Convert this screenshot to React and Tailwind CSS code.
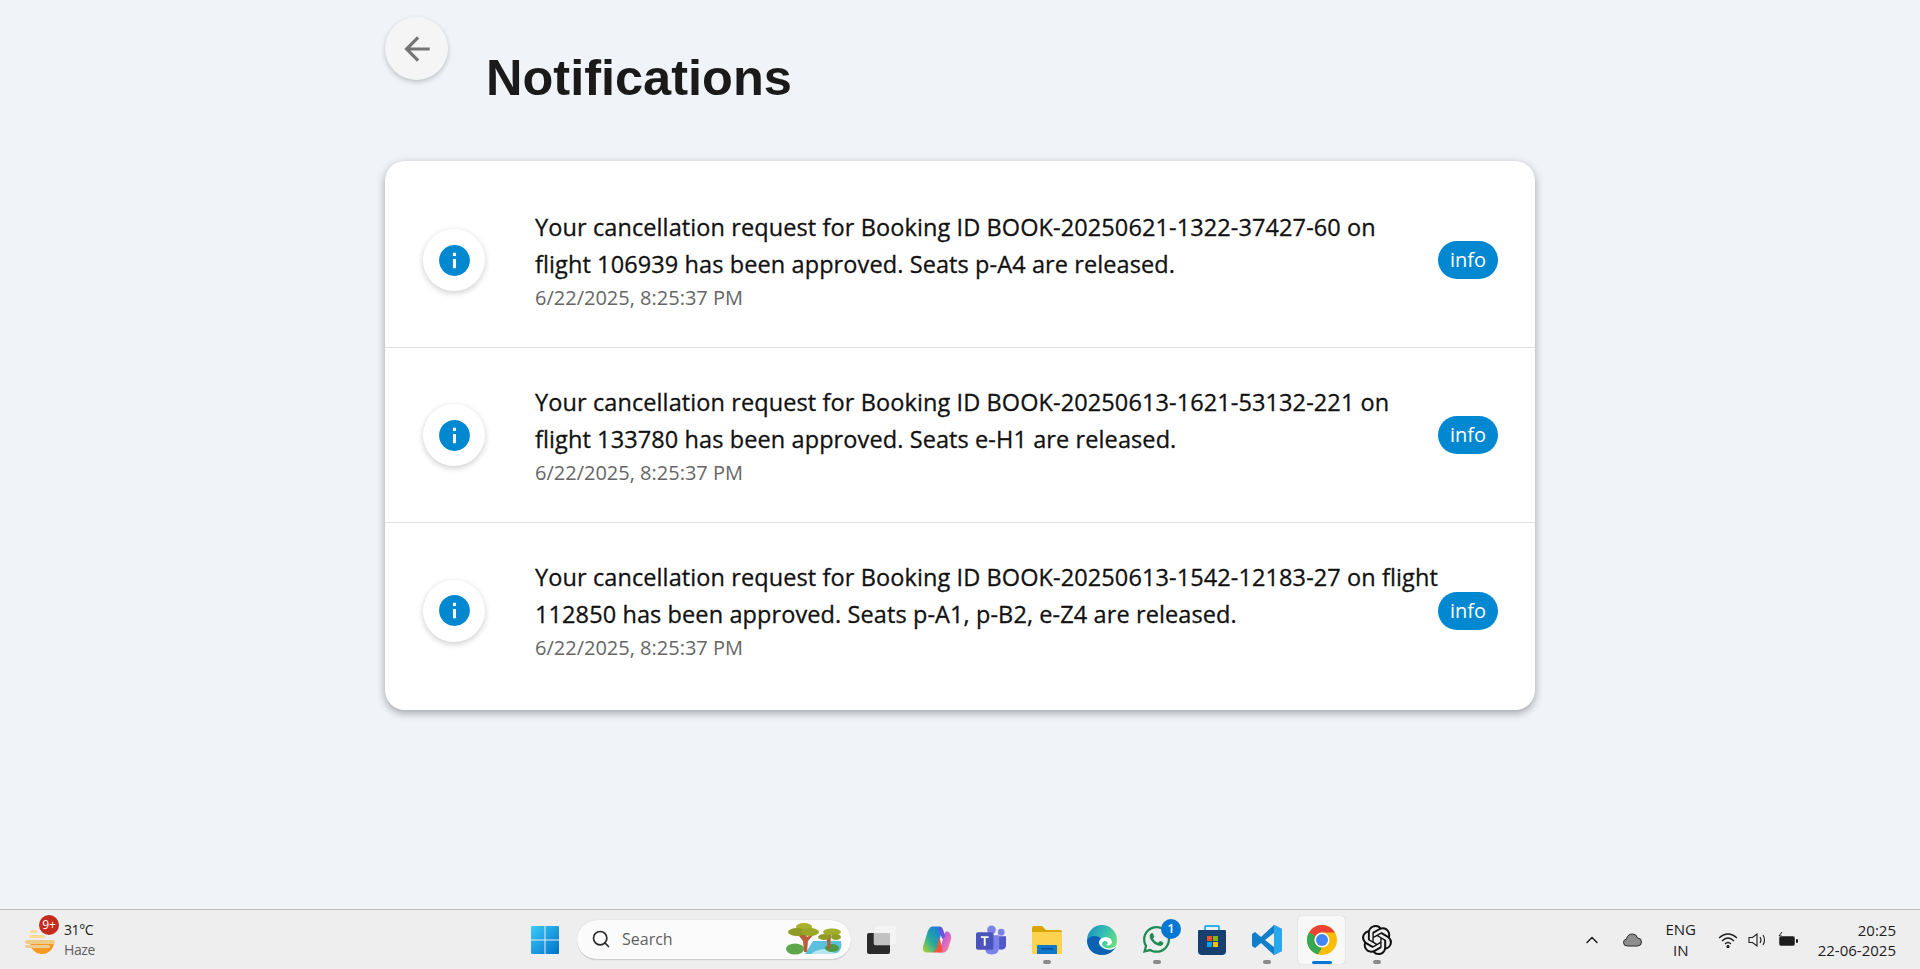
import React from "react";
import { Search, ChevronUp } from "lucide-react";
import { SiOpenai } from "react-icons/si";
import { FaWhatsapp } from "react-icons/fa";

const notifications = [
  {
    lines: [
      "Your cancellation request for Booking ID BOOK-20250621-1322-37427-60 on",
      "flight 106939 has been approved. Seats p-A4 are released.",
    ],
    time: "6/22/2025, 8:25:37 PM",
  },
  {
    lines: [
      "Your cancellation request for Booking ID BOOK-20250613-1621-53132-221 on",
      "flight 133780 has been approved. Seats e-H1 are released.",
    ],
    time: "6/22/2025, 8:25:37 PM",
  },
  {
    lines: [
      "Your cancellation request for Booking ID BOOK-20250613-1542-12183-27 on flight",
      "112850 has been approved. Seats p-A1, p-B2, e-Z4 are released.",
    ],
    time: "6/22/2025, 8:25:37 PM",
  },
];

const InfoIcon = () => (
  <svg viewBox="0 0 24 24" className="w-[37px] h-[37px] fill-[#0288d1]">
    <path d="M12 2C6.48 2 2 6.48 2 12s4.48 10 10 10 10-4.48 10-10S17.52 2 12 2zm1 15h-2v-6h2v6zm0-8h-2V7h2v2z" />
  </svg>
);

const ArrowBack = () => (
  <svg viewBox="0 0 24 24" className="w-[38px] h-[38px] fill-[#757575]">
    <path d="M20 11H7.83l5.59-5.59L12 4l-8 8 8 8 1.41-1.41L7.83 13H20v-2z" />
  </svg>
);

const NotificationRow = ({ item, last }) => (
  <div
    className={`flex items-center h-[175px] pl-[38px] pr-[37px] ${
      last ? "" : "border-b border-[#e0e0e0]"
    }`}
  >
    <div className="flex items-center justify-center w-[62px] h-[62px] shrink-0 rounded-full bg-white shadow-[0_2px_6px_rgba(0,0,0,0.2)]">
      <InfoIcon />
    </div>
    <div className="flex-1 ml-[50px] pt-[1px] min-w-0 whitespace-nowrap">
      <p className="text-[23.5px] leading-[37px] font-medium text-[#111111] tracking-[0.1px] [-webkit-text-stroke:0.3px_#111111]">
        {item.lines[0]}
        <br />
        {item.lines[1]}
      </p>
      <p className="text-[20px] leading-[30px] text-[#666666]">{item.time}</p>
    </div>
    <span className="flex items-center justify-center w-[60px] h-[38px] shrink-0 rounded-full bg-[#0288d1] text-white text-[20px]">
      info
    </span>
  </div>
);

const WeatherIcon = () => (
  <svg viewBox="0 0 34 34" className="w-[34px] h-[34px]">
    <path d="M6 19 H30 A12 12 0 0 1 6 19 Z" fill="#f39a1f" />
    <rect x="6" y="7" width="7" height="3" rx="1.5" fill="#f6dc94" />
    <rect x="5" y="12" width="16" height="3" rx="1.5" fill="#f6dc94" />
    <rect x="1" y="17" width="30" height="4" rx="2" fill="#eecb87" />
    <rect x="1" y="22" width="25" height="3" rx="1.5" fill="#eccb95" />
  </svg>
);

const WindowsLogo = () => (
  <svg viewBox="0 0 30 30" className="w-[30px] h-[30px]">
    <defs>
      <linearGradient id="win" x1="0" y1="0" x2="1" y2="1">
        <stop offset="0" stopColor="#3ccbfb" />
        <stop offset="1" stopColor="#0071c9" />
      </linearGradient>
    </defs>
    <path d="M1 2 a1 1 0 0 1 1-1 H14.5 V14.5 H1 Z M15.5 1 H28 a1 1 0 0 1 1 1 V14.5 H15.5 Z M1 15.5 H14.5 V29 H2 a1 1 0 0 1-1-1 Z M15.5 15.5 H29 V28 a1 1 0 0 1-1 1 H15.5 Z" fill="url(#win)" />
  </svg>
);

const Trees = () => (
  <svg viewBox="0 0 58 32" className="w-[58px] h-[32px] shrink-0">
    <path d="M20 31 L28 18 H56 Q58 26 52 30 L40 31 Z" fill="#5cc0dd" />
    <path d="M26 31 Q34 24 52 27 L46 31 Z" fill="#b4e8ee" />
    <ellipse cx="10" cy="26" rx="9" ry="5.5" fill="#5ea64a" />
    <ellipse cx="47" cy="25" rx="7" ry="4" fill="#4f9a45" />
    <path d="M16 12 L10 8 L18 18 L19 29 H22 L23 18 L30 10 L22 14 L20 8 Z" fill="#b85f3a" />
    <path d="M41 12 L43 26 H45 L46 12 Z" fill="#b85f3a" />
    <ellipse cx="19" cy="4" rx="8" ry="4" fill="#a8b02c" />
    <ellipse cx="12" cy="9" rx="9" ry="4" fill="#8f9c25" />
    <ellipse cx="25" cy="9" rx="9" ry="4" fill="#9aa828" />
    <ellipse cx="47" cy="9" rx="9" ry="3.5" fill="#a3ad2a" />
    <ellipse cx="39" cy="14" rx="6" ry="3" fill="#8f9c25" />
    <ellipse cx="51" cy="14" rx="5" ry="3" fill="#8f9c25" />
  </svg>
);

const TaskView = () => (
  <svg viewBox="0 0 30 30" className="w-[30px] h-[30px]">
    <rect x="0" y="8" width="23" height="21" rx="2" fill="#2a2a2a" />
    <rect x="7" y="0" width="23" height="20" rx="2" fill="#f4f4f4" stroke="#dddddd" strokeWidth="0.5" />
    <rect x="7" y="8" width="16" height="12" rx="1" fill="#c2c2c2" />
  </svg>
);

const Copilot = () => (
  <svg viewBox="0 0 32 30" className="w-[31px] h-[30px]">
    <defs>
      <linearGradient id="cpA" x1="0" y1="1" x2="1" y2="0">
        <stop offset="0" stopColor="#b9d62c" />
        <stop offset="0.45" stopColor="#24a8a0" />
        <stop offset="1" stopColor="#1f6fe8" />
      </linearGradient>
      <linearGradient id="cpB" x1="0" y1="0" x2="1" y2="1">
        <stop offset="0" stopColor="#7d58e8" />
        <stop offset="0.6" stopColor="#e26bc4" />
        <stop offset="1" stopColor="#f3a35c" />
      </linearGradient>
    </defs>
    <path d="M12 1 H18 Q21 1 22 4 L17 23 Q15 28 11 28 H6 Q1 28 2 22 L7 6 Q9 1 12 1 Z" fill="url(#cpA)" />
    <path d="M18 27 Q20 25 21 20 L24 9 Q25 6 27 6 Q32 8 31 14 L28 24 Q26 28 22 28 H18 Z" fill="url(#cpB)" />
    <path d="M19 1 Q22 1 23 5 L25 11 L22 14 L19 6 Z" fill="#6d4fe0" />
    <path d="M12 28 Q16 26 17 20 L19 12 L22 24 Q23 28 20 28 Z" fill="#f0573a" />
  </svg>
);

const Teams = () => (
  <svg viewBox="0 0 32 30" className="w-[31px] h-[30px]">
    <circle cx="26" cy="7" r="3.5" fill="#7b83eb" />
    <circle cx="16" cy="4.5" r="4.5" fill="#7b83eb" />
    <path d="M21 11 H31 V20 Q31 25 26 25 Q21 25 21 20 Z" fill="#5059c9" />
    <path d="M9 10 H24 V22 Q24 30 16 30 Q9 30 9 22 Z" fill="#7b83eb" />
    <rect x="0" y="7" width="18" height="18" rx="2" fill="#4b53bc" />
    <path d="M5 11 H13 V13 H10 V21 H8 V13 H5 Z" fill="#ffffff" />
  </svg>
);

const Explorer = () => (
  <svg viewBox="0 0 30 28" className="w-[30px] h-[28px]">
    <path d="M0 2 Q0 0 2 0 H10 L14 4 H28 Q30 4 30 6 V12 H0 Z" fill="#d9a406" />
    <path d="M0 6 H30 V27 Q30 28 29 28 H1 Q0 28 0 27 Z" fill="#fcd34f" />
    <path d="M5 20 Q5 19 6 19 H24 Q25 19 25 20 V28 H5 Z" fill="#0f79c9" />
    <rect x="9" y="22" width="12" height="1.5" fill="#0b4f8f" />
  </svg>
);

const Edge = () => (
  <svg viewBox="0 0 30 30" className="w-[30px] h-[30px]">
    <defs>
      <linearGradient id="edgeTop" x1="0" y1="0" x2="1" y2="0.6">
        <stop offset="0" stopColor="#1a87c9" />
        <stop offset="0.55" stopColor="#35c1b0" />
        <stop offset="1" stopColor="#6be07a" />
      </linearGradient>
    </defs>
    <circle cx="15" cy="15" r="15" fill="url(#edgeTop)" />
    <path d="M0 15 C0 25 7 30 15 30 C21 30 26 27 29 22 C24 25 19 25 16 23 C12 21 11 17 14 13 C9 10 3 10 0 15 Z" fill="#0c62b2" />
    <path d="M15 22 C11 20 11 15 15 13 C19 11 25 13 25 17 C25 20 21 21 19 20 C22 19 21 16 18 16 C15 16 14 20 17 22 C20 24 25 24 29 21 L28 23 C24 26 19 25 15 22 Z" fill="#ffffff" />
  </svg>
);

const Store = () => (
  <svg viewBox="0 0 30 30" className="w-[30px] h-[30px]">
    <path d="M8 5 V2 Q8 1 9 1 H21 Q22 1 22 2 V5" fill="none" stroke="#27b4e8" strokeWidth="2" />
    <path d="M1 6 Q1 5 2 5 H28 Q29 5 29 6 V26 Q29 30 25 30 H5 Q1 30 1 26 Z" fill="#16406f" />
    <rect x="10" y="11" width="5" height="5" fill="#f25022" />
    <rect x="16" y="11" width="5" height="5" fill="#7fba00" />
    <rect x="10" y="17" width="5" height="5" fill="#00a4ef" />
    <rect x="16" y="17" width="5" height="5" fill="#ffb900" />
  </svg>
);

const VsCode = () => (
  <svg viewBox="0 0 30 30" className="w-[30px] h-[30px]">
    <path d="M22 0 L30 4 V26 L22 30 L9 18 L3 23 L0 21 V9 L3 7 L9 12 Z M22 8 L13 15 L22 22 Z" fill="#0f7fc9" fillRule="evenodd" />
    <path d="M22 0 L30 4 V26 L22 30 Z" fill="#29a9ec" />
  </svg>
);

const Chrome = () => (
  <svg viewBox="0 0 30 30" className="w-[30px] h-[30px]">
    <circle cx="15" cy="15" r="15" fill="#fbbc04" />
    <path d="M15 0 A15 15 0 0 1 28 7.5 H15 A7.5 7.5 0 0 0 8.5 11.2 L2 7.5 A15 15 0 0 1 15 0 Z" fill="#ea4335" />
    <path d="M2 7.5 L8.5 11.2 A7.5 7.5 0 0 0 15 22.5 L11 29.5 A15 15 0 0 1 2 7.5 Z" fill="#34a853" />
    <circle cx="15" cy="15" r="7.5" fill="#ffffff" />
    <circle cx="15" cy="15" r="6" fill="#4285f4" />
  </svg>
);

const TaskbarButton = ({ children, dot, active, badge }) => (
  <div
    className={`relative flex items-center justify-center w-[47px] h-[48px] mx-[4px] rounded-[4px] ${
      active ? "bg-[#f8f8f8] shadow-[0_0_1px_rgba(0,0,0,0.25)]" : ""
    }`}
  >
    {children}
    {badge && (
      <span className="absolute top-[3px] right-[-1px] flex items-center justify-center w-[20px] h-[20px] rounded-full bg-[#0678d4] text-white text-[12px] font-semibold">
        {badge}
      </span>
    )}
    {dot && <span className="absolute bottom-0 w-[8px] h-[4px] rounded-full bg-[#8a8a8a]" />}
    {active && <span className="absolute bottom-0 w-[20px] h-[3px] rounded-full bg-[#0678d4]" />}
  </div>
);

const Taskbar = () => (
  <div className="flex items-center h-[60px] border-t border-[#bdbdbd] bg-[#eeeeee] font-['Open_Sans',sans-serif]">
    <div className="flex items-center w-[530px] pl-[24px]">
      <div className="relative w-[34px] h-[34px]">
        <WeatherIcon />
        <span className="absolute top-[-8px] left-[15px] flex items-center justify-center w-[20px] h-[20px] rounded-full bg-[#c42b1c] text-white text-[12px]">
          9+
        </span>
      </div>
      <div className="ml-[6px] text-[14px] leading-[20px] tracking-[-0.4px]">
        <p className="text-[#1c1c1c]">31°C</p>
        <p className="text-[#5f5f5f]">Haze</p>
      </div>
    </div>

    <div className="flex items-center">
      <WindowsLogo />
      <div className="flex items-center w-[274px] h-[40px] ml-[17px] pl-[14px] pr-[8px] rounded-full bg-[#fbfbfb] border-b border-[#cfcfcf] shadow-[0_0_1px_rgba(0,0,0,0.2)]">
        <Search className="w-[20px] h-[20px] text-[#2a2a2a]" strokeWidth={2} />
        <span className="flex-1 ml-[11px] text-[16px] text-[#5f5f5f]">Search</span>
        <Trees />
      </div>
      <div className="flex items-center ml-[3px]">
        <TaskbarButton><TaskView /></TaskbarButton>
        <TaskbarButton><Copilot /></TaskbarButton>
        <TaskbarButton><Teams /></TaskbarButton>
        <TaskbarButton dot><Explorer /></TaskbarButton>
        <TaskbarButton><Edge /></TaskbarButton>
        <TaskbarButton dot badge="1"><FaWhatsapp className="w-[31px] h-[31px] text-[#1f8a56]" /></TaskbarButton>
        <TaskbarButton><Store /></TaskbarButton>
        <TaskbarButton dot><VsCode /></TaskbarButton>
        <TaskbarButton active><Chrome /></TaskbarButton>
        <TaskbarButton dot><SiOpenai className="w-[30px] h-[30px] text-[#111111]" /></TaskbarButton>
      </div>
    </div>

    <div className="flex items-center ml-auto pr-[24px] text-[#1c1c1c]">
      <ChevronUp className="w-[20px] h-[20px]" strokeWidth={1.8} />
      <svg viewBox="0 0 20 14" className="w-[21px] h-[14px] ml-[20px]">
        <path d="M5 13 Q1 13 1 9.5 Q1 6.5 4 6 Q5 1 10 1 Q14 1 15 5 Q19 5 19 9 Q19 13 15 13 Z" fill="#8e8e8e" stroke="#2a2a2a" strokeWidth="1" />
      </svg>
      <div className="w-[32px] ml-[22px] text-center text-[15px] leading-[21px]">
        <p>ENG</p>
        <p>IN</p>
      </div>
      <svg viewBox="0 0 20 16" className="w-[20px] h-[16px] ml-[21px]" fill="none" stroke="#1c1c1c" strokeWidth="1.2">
        <path d="M1 6 Q10 -2 19 6" />
        <path d="M4 9 Q10 3 16 9" />
        <path d="M7 12 Q10 9 13 12" />
        <circle cx="10" cy="14.5" r="1" fill="#1c1c1c" />
      </svg>
      <svg viewBox="0 0 20 16" className="w-[20px] h-[16px] ml-[10px]" fill="none" stroke="#1c1c1c" strokeWidth="1.1">
        <path d="M1 5.5 H4.5 L9 2 V14 L4.5 10.5 H1 Z" />
        <path d="M12 5 Q14 8 12 11" />
        <path d="M15 3 Q18 8 15 13" />
      </svg>
      <svg viewBox="0 0 20 16" className="w-[20px] h-[16px] ml-[10px]">
        <path d="M4 0 L1 4 H4 L2 8" fill="none" stroke="#1c1c1c" strokeWidth="1" />
        <rect x="1" y="4" width="16" height="10" rx="2" fill="#1c1c1c" stroke="#eeeeee" strokeWidth="0.5" />
        <rect x="18" y="7" width="2" height="4" rx="1" fill="#1c1c1c" />
      </svg>
      <div className="ml-[20px] text-right text-[15px] leading-[20px]">
        <p>20:25</p>
        <p>22-06-2025</p>
      </div>
    </div>
  </div>
);

export default function App() {
  return (
    <div className="flex flex-col h-[969px] bg-[#f0f4f9] font-['Open_Sans',sans-serif] overflow-hidden">
      <main className="flex-1 w-[1150px] mx-auto pt-[17px]">
        <header className="flex items-start h-[144px]">
          <button className="flex items-center justify-center w-[63px] h-[63px] rounded-full bg-[#f5f5f5] shadow-[0_2px_5px_rgba(0,0,0,0.22)]">
            <ArrowBack />
          </button>
          <h1 className="ml-[38px] mt-[31px] text-[50.5px] leading-[60px] font-bold text-[#1a1a1a] font-['Liberation_Sans',sans-serif]">
            Notifications
          </h1>
        </header>
        <section className="py-[12px] rounded-[20px] bg-white shadow-[0_3px_8px_rgba(0,0,0,0.35)]">
          {notifications.map((item, i) => (
            <NotificationRow key={i} item={item} last={i === notifications.length - 1} />
          ))}
        </section>
      </main>
      <Taskbar />
    </div>
  );
}
